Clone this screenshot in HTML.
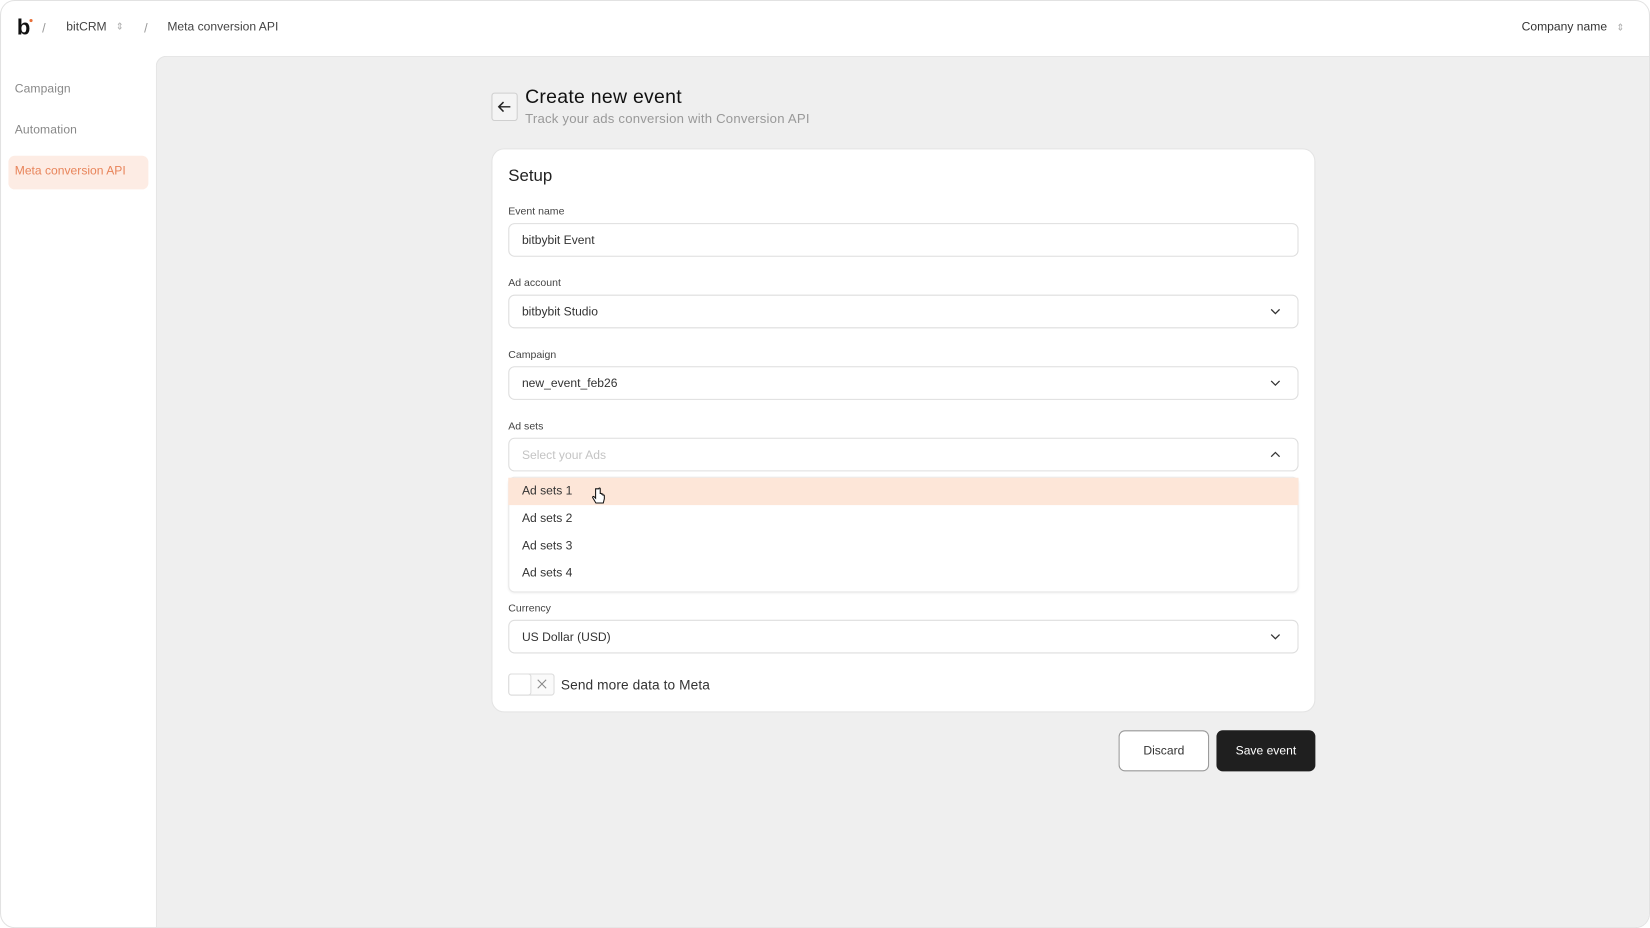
<!DOCTYPE html>
<html><head><meta charset="utf-8"><style>
*{box-sizing:border-box;margin:0;padding:0}
html,body{width:1650px;height:928px;overflow:hidden;background:#fff;font-family:"Liberation Sans",sans-serif}
#w{position:absolute;left:0;top:0;width:1568px;height:882px;transform:scale(1.0523);transform-origin:0 0;background:#fff;border:1px solid #e2e2e2;border-radius:14px;overflow:hidden}
.a{position:absolute}
.t{position:absolute;white-space:nowrap;line-height:1}
.main{left:147px;top:52px;width:1421px;height:830px;background:#efefef;border-top:1px solid #e4e4e4;border-left:1px solid #e4e4e4;border-top-left-radius:10px}
.lbl{font-size:10px;color:#444;left:482px}
.inp{position:absolute;left:482px;width:751px;height:32px;border:1px solid #dedede;border-radius:6px;background:#fff}
.inp span{position:absolute;left:12px;top:10px;font-size:11.5px;color:#333;white-space:nowrap}
.chev{position:absolute;right:16px;top:11px}
.btn{position:absolute;display:flex;align-items:center;justify-content:center;font-size:11.5px;border-radius:6px}
</style></head><body><div id="w">
<div class="t" style="left:15px;top:15px;font-size:21px;font-weight:bold;color:#111">b</div>
<div class="a" style="left:27px;top:17px;width:3px;height:3px;border-radius:50%;background:#e8703a"></div>
<div class="t" style="left:39px;top:20px;font-size:12px;color:#999">/</div>
<div class="t" style="left:62px;top:20px;font-size:11.5px;color:#444">bitCRM</div>
<div class="t" style="left:109px;top:20px;font-size:9px;color:#aaa">⇕</div>
<div class="t" style="left:136px;top:20px;font-size:12px;color:#999">/</div>
<div class="t" style="left:158px;top:20px;font-size:11.5px;color:#444">Meta conversion API</div>
<div class="t" style="left:1445px;top:20px;font-size:11.5px;color:#333">Company name</div>
<div class="t" style="left:1535px;top:21px;font-size:9px;color:#aaa">⇕</div>
<div class="t" style="left:13px;top:79px;font-size:11.5px;color:#888;letter-spacing:.1px">Campaign</div>
<div class="t" style="left:13px;top:118px;font-size:11.5px;color:#888;letter-spacing:.1px">Automation</div>
<div class="a" style="left:7px;top:147px;width:133px;height:32px;border-radius:6px;background:#fdece4"></div>
<div class="t" style="left:13px;top:157px;font-size:11.5px;color:#e8845a">Meta conversion API</div>
<div class="a main"></div>
<div class="a" style="left:466px;top:87px;width:25px;height:27px;border:1px solid #cfcfcf;border-radius:3px;background:#f4f4f4"><svg width="23" height="25" viewBox="0 0 23 25"><path d="M17 12.5H6M10.5 8l-4.5 4.5 4.5 4.5" fill="none" stroke="#222" stroke-width="1.4"/></svg></div>
<div class="t" style="left:498px;top:82px;font-size:18.5px;color:#111;letter-spacing:.25px">Create new event</div>
<div class="t" style="left:498px;top:106px;font-size:12.5px;color:#999;letter-spacing:.2px">Track your ads conversion with Conversion API</div>
<div class="a" style="left:466px;top:140px;width:783px;height:536px;background:#fff;border:1px solid #e4e4e4;border-radius:12px"></div>
<div class="t" style="left:482px;top:159px;font-size:16px;color:#222">Setup</div>
<div class="t lbl" style="top:196px">Event name</div>
<div class="inp" style="top:211px"><span>bitbybit Event</span></div>
<div class="t lbl" style="top:264px">Ad account</div>
<div class="inp" style="top:279px"><span>bitbybit Studio</span><svg class="chev" width="10" height="8"><path d="M1 2l4 4 4-4" fill="none" stroke="#333" stroke-width="1.2"/></svg></div>
<div class="t lbl" style="top:332px">Campaign</div>
<div class="inp" style="top:347px"><span>new_event_feb26</span><svg class="chev" width="10" height="8"><path d="M1 2l4 4 4-4" fill="none" stroke="#333" stroke-width="1.2"/></svg></div>
<div class="t lbl" style="top:400px">Ad sets</div>
<div class="inp" style="top:415px"><span style="color:#c4c4c4">Select your Ads</span><svg class="chev" width="10" height="8"><path d="M1 6l4-4 4 4" fill="none" stroke="#333" stroke-width="1.2"/></svg></div>
<div class="a" style="left:482px;top:452px;width:751px;height:110px;background:#fff;border:1px solid #e8e8e8;border-radius:6px;box-shadow:0 1px 2px rgba(0,0,0,.06)"></div>
<div class="a" style="left:482px;top:453px;width:751px;height:26px;background:#fde6d8"></div>
<div class="t" style="left:495px;top:461px;font-size:11.5px;color:#333">Ad sets 1</div>
<div class="t" style="left:495px;top:487px;font-size:11.5px;color:#333">Ad sets 2</div>
<div class="t" style="left:495px;top:513px;font-size:11.5px;color:#333">Ad sets 3</div>
<div class="t" style="left:495px;top:539px;font-size:11.5px;color:#333">Ad sets 4</div>
<svg class="a" style="left:561px;top:462px" width="14" height="18" viewBox="0 0 14 18"><path d="M4 1.5v9l-1.5-1.5c-.8-.6-1.8.2-1.2 1l3 5h7l1-4v-3c0-.8-1.3-.8-1.3 0v-1c0-.8-1.3-.8-1.3 0v-.5c0-.8-1.3-.8-1.3 0V1.5c0-1-1.4-1-1.4 0z" fill="#fff" stroke="#111" stroke-width="1"/></svg>
<div class="t lbl" style="top:573px">Currency</div>
<div class="inp" style="top:588px"><span>US Dollar (USD)</span><svg class="chev" width="10" height="8"><path d="M1 2l4 4 4-4" fill="none" stroke="#333" stroke-width="1.2"/></svg></div>
<div class="a" style="left:482px;top:639px;width:44px;height:21px;border:1px solid #dcdcdc;border-radius:3px;background:#fafafa"></div>
<div class="a" style="left:482px;top:639px;width:22px;height:21px;border:1px solid #dcdcdc;border-radius:3px;background:#fff"></div>
<svg class="a" style="left:509px;top:644px" width="10" height="10"><path d="M1 1l8 8M9 1l-8 8" stroke="#888" stroke-width="1"/></svg>
<div class="t" style="left:532px;top:643px;font-size:13px;color:#333;letter-spacing:.1px">Send more data to Meta</div>
<div class="btn" style="left:1062px;top:693px;width:86px;height:39px;border:1px solid #999;background:#fff;color:#333">Discard</div>
<div class="btn" style="left:1155px;top:693px;width:94px;height:39px;background:#1f1f1f;color:#fff">Save event</div>
</div></body></html>
